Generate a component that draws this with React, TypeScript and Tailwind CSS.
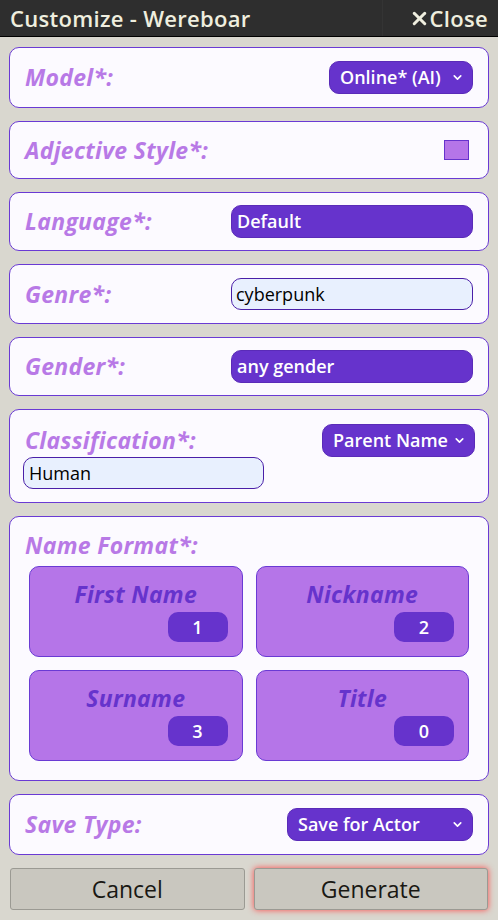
import React from 'react';
import { ChevronDown, X } from 'lucide-react';

const font = { fontFamily: '"Open Sans", "Noto Sans", sans-serif' };

function Select({ value, className }: { value: string; className?: string }) {
  return (
    <div
      className={`flex h-[33px] items-center justify-between whitespace-nowrap rounded-[10px] border border-[#5a2bb8] bg-[#6633cc] pl-[10px] pr-[8px] text-[18px] font-semibold text-white ${className ?? ''}`}
    >
      <span>{value}</span>
      <ChevronDown size={13} strokeWidth={3} className="ml-1 shrink-0" />
    </div>
  );
}

function Panel({ h, children, className }: { h: string; children: React.ReactNode; className?: string }) {
  return (
    <div className={`rounded-[10px] border border-[#6a3ad4] bg-[#fcfaff] px-[15px] ${h} ${className ?? ''}`}>
      {children}
    </div>
  );
}

function Label({ children }: { children: React.ReactNode }) {
  return (
    <span className="text-[23px] font-bold italic tracking-[0.3px] text-[#b879e6]">{children}</span>
  );
}

const parts = [
  { title: 'First Name', n: 1 },
  { title: 'Nickname', n: 2 },
  { title: 'Surname', n: 3 },
  { title: 'Title', n: 0 },
];

export default function App() {
  return (
    <div className="flex h-[920px] w-[498px] flex-col bg-[#d9d7cf]" style={font}>
      <header className="flex h-[37px] items-center justify-between border-b border-black bg-[#2e2e2e] pl-[10px] text-[22px] font-semibold tracking-[0.3px] text-[#efeedf]">
        <span>Customize - Wereboar</span>
        <span className="flex h-full items-center border-l border-[#343434] pl-[26px] pr-[10px]">
          <X size={21} strokeWidth={3.5} />
          Close
        </span>
      </header>

      <main className="flex flex-col gap-[13px] px-[9px] pt-[10px]">
        <Panel h="h-[61px]" className="flex items-center justify-between">
          <Label>Model*:</Label>
          <Select value="Online* (AI)" className="w-[144px]" />
        </Panel>

        <Panel h="h-[58px]" className="flex items-center justify-between">
          <Label>Adjective Style*:</Label>
          <div className="mr-[4px] h-[20px] w-[25px] border border-[#6633cc] bg-[#b575e8]" />
        </Panel>

        <Panel h="h-[59px]" className="flex items-center justify-between">
          <Label>Language*:</Label>
          <div className="flex h-[33px] w-[242px] items-center rounded-[10px] border border-[#5a2bb8] bg-[#6633cc] px-[5px] text-[18px] font-semibold text-white">
            Default
          </div>
        </Panel>

        <Panel h="h-[60px]" className="flex items-center justify-between">
          <Label>Genre*:</Label>
          <div className="flex h-[32px] w-[242px] items-center rounded-[10px] border border-[#4a1fa8] bg-[#e8f0fe] px-[4px] text-[18px] text-black">
            cyberpunk
          </div>
        </Panel>

        <Panel h="h-[59px]" className="flex items-center justify-between">
          <Label>Gender*:</Label>
          <div className="flex h-[33px] w-[242px] items-center rounded-[10px] border border-[#5a2bb8] bg-[#6633cc] px-[5px] text-[18px] font-semibold text-white">
            any gender
          </div>
        </Panel>

        <Panel h="h-[94px]" className="flex flex-col justify-center !px-[13px]">
          <div className="flex items-center justify-between pl-[2px]">
            <Label>Classification*:</Label>
            <Select value="Parent Name" className="w-[153px]" />
          </div>
          <div className="flex h-[32px] w-[241px] items-center rounded-[10px] border border-[#4a1fa8] bg-[#e8f0fe] px-[5px] text-[18px] text-black">
            Human
          </div>
        </Panel>

        <Panel h="h-[265px]" className="flex flex-col pt-[14px] !px-[19px]">
          <div className="-ml-[4px] leading-[28px]">
            <Label>Name Format*:</Label>
          </div>
          <div className="mt-[4px] grid grid-cols-2 gap-x-[13px] gap-y-[13px]">
            {parts.map((p) => (
              <div
                key={p.title}
                className="flex h-[91px] flex-col rounded-[10px] border border-[#6a3ad4] bg-[#b575e8] pt-[13px]"
              >
                <span className="text-center text-[23px] font-bold italic leading-[28px] tracking-[0.3px] text-[#6633cc]">
                  {p.title}
                </span>
                <div className="mr-[14px] mt-[4px] flex h-[30px] w-[60px] items-center justify-center self-end rounded-[10px] bg-[#6633cc] text-[18px] font-semibold text-white">
                  {p.n}
                </div>
              </div>
            ))}
          </div>
        </Panel>

        <Panel h="h-[61px]" className="flex items-center justify-between">
          <Label>Save Type:</Label>
          <Select value="Save for Actor" className="w-[186px]" />
        </Panel>

        <div className="flex gap-[9px] px-[1px]">
          <button className="h-[42px] flex-1 rounded-[3px] border border-[#9b9a93] bg-[#c9c7bf] text-[23px] text-[#191813]">
            Cancel
          </button>
          <button className="h-[42px] flex-1 rounded-[3px] border border-[#9b9a93] bg-[#c9c7bf] text-[23px] text-[#191813] shadow-[0_0_6px_#ff4a4a]">
            Generate
          </button>
        </div>
      </main>
    </div>
  );
}
